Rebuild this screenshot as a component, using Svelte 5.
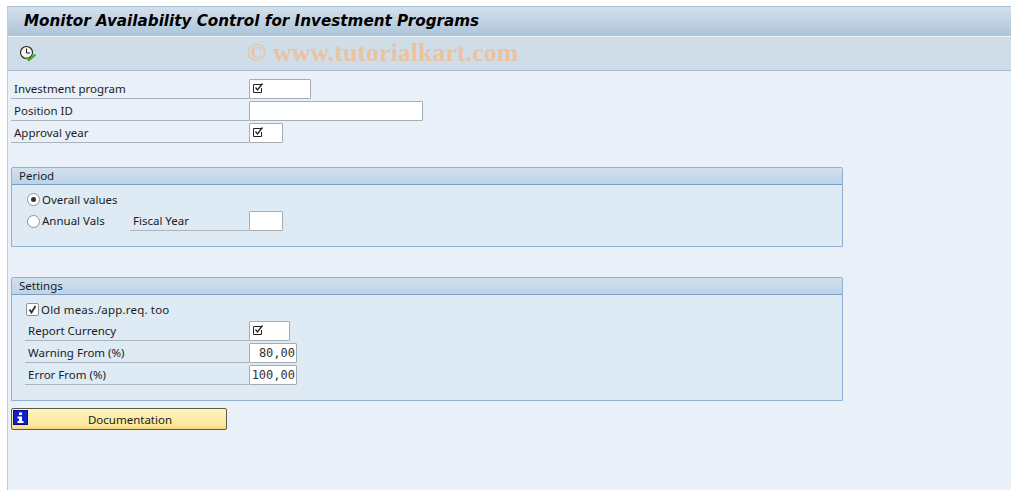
<script>
  const mainFields = [
    { label: 'Investment program', w: 62, req: true },
    { label: 'Position ID', w: 174 },
    { label: 'Approval year', w: 34, req: true }
  ];
  const settingFields = [
    { label: 'Report Currency', w: 41, req: true },
    { label: 'Warning From (%)', w: 48, value: '80,00' },
    { label: 'Error From (%)', w: 48, value: '100,00' }
  ];
</script>

{#snippet reqMark()}
  <svg class="req" width="12" height="12" viewBox="0 0 12 12" aria-hidden="true">
    <path d="M9 2.5H1.5V10.5H9.5V6" fill="none" stroke="#222" stroke-width="1"/>
    <path d="M3.5 5.5L5.5 8L10.5 1.5" fill="none" stroke="#222" stroke-width="1.3"/>
  </svg>
{/snippet}

{#snippet field(f)}
  <div class="row">
    <span class="label">{f.label}</span>
    <span class="input" style="width:{f.w}px">
      {#if f.req}{@render reqMark()}{/if}
      {#if f.value}<span class="mono">{f.value}</span>{/if}
    </span>
  </div>
{/snippet}

<div class="page">
  <header class="title"><h1>Monitor Availability Control for Investment Programs</h1></header>
  <div class="toolbar">
    <svg class="exec" width="20" height="18" viewBox="0 0 20 18" aria-hidden="true">
      <circle cx="7.5" cy="8.5" r="6" fill="#f4f6f2" stroke="#222" stroke-width="1.1"/>
      <path d="M7.5 4.5V9H11" fill="none" stroke="#222" stroke-width="1"/>
      <path d="M7 13.5L10 16L16.5 10.5" fill="none" stroke="#49a82c" stroke-width="2.2"/>
    </svg>
    <span class="mark">© www.tutorialkart.com</span>
  </div>

  <main class="content">
    <section class="fields">
      {#each mainFields as f}{@render field(f)}{/each}
    </section>

    <section class="group period">
      <h2>Period</h2>
      <div class="body">
        <div class="opt">
          <span class="radio on"></span><span>Overall values</span>
        </div>
        <div class="opt">
          <span class="radio"></span><span class="annual">Annual Vals</span>
          <span class="label fiscal">Fiscal Year</span>
          <span class="input" style="width:34px"></span>
        </div>
      </div>
    </section>

    <section class="group settings">
      <h2>Settings</h2>
      <div class="body">
        <div class="opt check">
          <span class="box">
            <svg width="11" height="11" viewBox="0 0 11 11" aria-hidden="true"><path d="M2.5 5.5L4.5 8.5L8.5 2" fill="none" stroke="#333" stroke-width="1.8"/></svg>
          </span>
          <span class="old">Old meas./app.req. too</span>
        </div>
        {#each settingFields as f}{@render field(f)}{/each}
      </div>
    </section>

    <button class="doc" type="button">
      <svg class="info" width="15" height="15" viewBox="0 0 15 15" aria-hidden="true">
        <rect width="15" height="15" fill="#0a0a9c"/>
        <rect x="1" y="1" width="13" height="13" fill="#1220c8"/>
        <path d="M6 2.5H9V5H6ZM4.5 6.5H9V11H10.5V13H4.5V11H6V8.5H4.5Z" fill="#fff"/>
      </svg>
      Documentation
    </button>
  </main>
</div>

<style>
  :global(body) {
    margin: 0;
    background: #fff;
    overflow: hidden;
  }
  .page {
    width: 1004px;
    height: 484px;
    margin: 6px 0 0 7px;
    background: #e9f0f7;
    border-left: 1px solid #b9c9d8;
    box-sizing: border-box;
    font: 11.5px/19px "Noto Sans", sans-serif;
    color: #1c1c1c;
    overflow: hidden;
  }
  .title {
    height: 31px;
    box-sizing: border-box;
    border-top: 1px solid #a9bfd3;
    border-bottom: 1px solid #f0f5f9;
    background: linear-gradient(#d4e0ec, #adc4d9);
    padding-left: 16px;
  }
  h1 {
    margin: 0;
    font: italic bold 15.2px/28px "DejaVu Sans", sans-serif;
    color: #000;
    white-space: nowrap;
  }
  .toolbar {
    height: 34px;
    box-sizing: border-box;
    background: #cfdde8;
    border-bottom: 1px solid #a3b9ce;
    display: flex;
    align-items: center;
    padding-left: 11px;
    position: relative;
  }
  .exec { margin-top: -2px; }
  .mark {
    position: absolute;
    left: 239px;
    top: 2px;
    font: bold 26px/28px "Liberation Serif", serif;
    color: #ebc39f;
    white-space: nowrap;
  }
  .content {
    padding: 8px 0 0 3px;
  }
  .fields {
    display: flex;
    flex-direction: column;
    gap: 2px;
    margin-bottom: 24px;
  }
  .row {
    display: flex;
    align-items: flex-end;
  }
  .label {
    display: block;
    box-sizing: border-box;
    width: 238px;
    height: 20px;
    padding-left: 3px;
    border-bottom: 1px solid #a9b4bd;
    white-space: nowrap;
  }
  .input {
    display: block;
    position: relative;
    height: 20px;
    box-sizing: border-box;
    background: #fff;
    border: 1px solid #a5adb3;
    border-radius: 1px;
  }
  .req {
    position: absolute;
    left: 2px;
    top: 2px;
  }
  .mono {
    display: block;
    text-align: right;
    padding-right: 1px;
    font: 12px/19px "DejaVu Sans Mono", monospace;
    color: #333;
  }
  .group {
    width: 832px;
    box-sizing: border-box;
    border: 1px solid #8eb1d1;
    border-radius: 2px 2px 0 0;
    background: #deeaf4;
  }
  .period { height: 80px; margin-bottom: 30px; }
  .settings { height: 124px; margin-bottom: 7px; }
  h2 {
    margin: 0;
    height: 17px;
    box-sizing: border-box;
    padding-left: 7px;
    font: 11.5px/15px "Noto Sans", sans-serif;
    background: linear-gradient(#d0e0ee, #bcd3e8);
    border-bottom: 1px solid #7fa0c0;
  }
  .body {
    padding: 4px 0 0 15px;
    display: flex;
    flex-direction: column;
    gap: 2px;
  }
  .settings .body { padding-left: 13px; }
  .settings .label { width: 224px; }
  .opt {
    display: flex;
    align-items: center;
    height: 20px;
    white-space: nowrap;
  }
  .period .opt:last-child { align-items: flex-end; }
  .radio {
    width: 13px;
    height: 13px;
    box-sizing: border-box;
    margin: 0 2px 3px 0;
    flex: none;
    border: 1px solid #8a949c;
    border-radius: 50%;
    background: #fff;
    position: relative;
  }
  .opt:first-child .radio { margin-bottom: 0; }
  .radio.on::after {
    content: "";
    position: absolute;
    left: 3px;
    top: 3px;
    width: 5px;
    height: 5px;
    border-radius: 50%;
    background: #333;
  }
  .annual { width: 88px; margin-bottom: 1px; }
  .fiscal {
    width: 119px;
  }
  .old { letter-spacing: 0.18px; }
  .box {
    width: 13px;
    height: 13px;
    box-sizing: border-box;
    margin: 0 2px 0 1px;
    border: 1px solid #8a949c;
    border-radius: 2px;
    background: #fff;
    display: flex;
    flex: none;
  }
  .doc {
    display: block;
    position: relative;
    width: 216px;
    height: 22px;
    padding: 1px 0 0 22px;
    border: 1px solid #5d5a45;
    border-radius: 2px;
    background: linear-gradient(#fff4c4, #fde596 85%, #f2d67e);
    font: 11.5px/20px "Noto Sans", sans-serif;
    color: #1c1c1c;
    text-align: center;
  }
  .info {
    position: absolute;
    left: 1px;
    top: 1px;
  }
</style>
